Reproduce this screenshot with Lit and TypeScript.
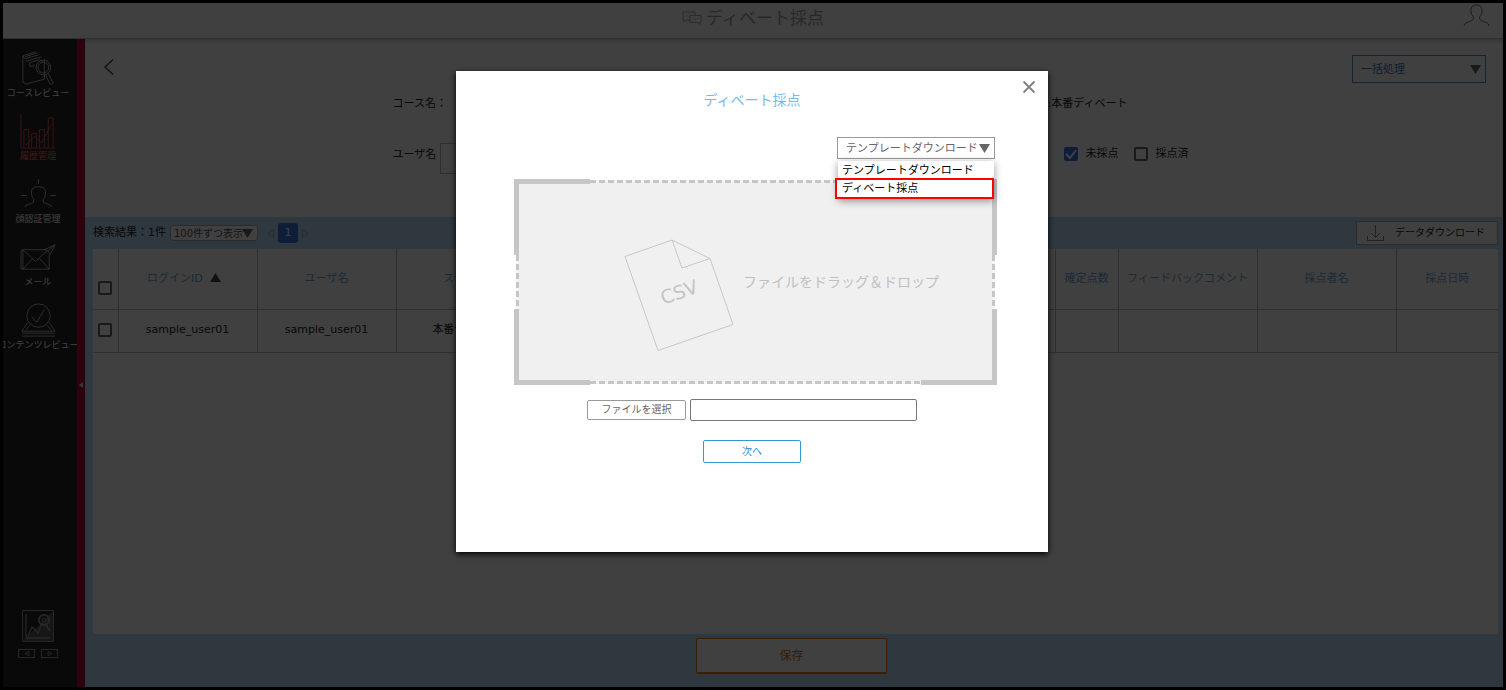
import { LitElement, html, svg, css } from "lit";
import { customElement, property, state } from "lit/decorators.js";
import { classMap } from "lit/directives/class-map.js";

const base = css`
  *,
  *::before {
    box-sizing: border-box;
  }
  button,
  input,
  select {
    font: inherit;
    color: inherit;
    margin: 0;
    padding: 0;
    border: 0;
    border-radius: 0;
    background: none;
  }
  svg {
    display: block;
    flex: none;
  }
`;

const menu = [
  {
    label: "コースレビュー",
    icon: svg`<path d="M3 6v27l3 2 19-5V9M3 6 16 2M3 6l2 3 14-4M5 7l13-4M8 11l14-4M6 10l2 2M10 17v-4l10-3 3 2M10 17l5-1M25 26v3"/><circle cx="24" cy="18" r="7.5"/><circle cx="24" cy="18" r="5.5"/><path d="m26 25 5 10q2 1 3-1l-5-10"/>`,
  },
  {
    label: "履歴管理",
    active: true,
    icon: svg`<path d="M1 1v35h35M4 36V17h5v19M12 36V21h5v15M20 36V17h5v19M29 36V5h5v31M6 33l9-9 7 7 10-19"/>`,
  },
  {
    label: "顔認証管理",
    icon: svg`<path d="M19 3v5M1 20h6M31 20h6M14 24q-2-2-2-5-2-8 7-8t7 8q0 3-2 5v3q1 1 5 2 4 1 4 3M14 24v3q-1 1-5 2-4 1-4 3"/>`,
  },
  {
    label: "メール",
    icon: svg`<path d="M3 11h24M3 11v20h27V16M3 31l10-11M30 31 20 20M3 11l13 12 12-11M3 12H1v19h2M36 6l-11 5 4 1 2 4 5-10-7 6"/>`,
  },
  {
    label: "コンテンツレビュー",
    icon: svg`<circle cx="19" cy="14" r="12"/><path d="m12 15 5 6 8-13M8 21 2 30h34l-6-9M10 24l-4 5M28 24l4 5M2 32h34M2 35h34"/>`,
  },
];

@customElement("side-menu")
class SideMenu extends LitElement {
  static styles = [
    base,
    css`
      :host {
        display: flex;
        background: #282424;
        color: #fff;
        font-size: 9px;
        line-height: 12px;
        overflow: hidden;
      }
      .column {
        width: 74px;
        padding: 11px 4px 29px 0;
        display: flex;
        flex-direction: column;
        justify-content: space-between;
        overflow: hidden;
      }
      nav {
        display: flex;
        flex-direction: column;
        gap: 14px;
      }
      .item {
        display: flex;
        flex-direction: column;
        align-items: center;
        color: inherit;
        text-decoration: none;
        white-space: nowrap;
      }
      .item svg {
        stroke: #b8b8b8;
      }
      .active {
        color: #ff686c;
      }
      .active svg {
        stroke: #d85054;
      }
      .foot {
        display: flex;
        flex-direction: column;
        align-items: center;
        gap: 7px;
      }
      .steps {
        display: flex;
        gap: 6px;
      }
      .steps button {
        width: 17px;
        height: 9px;
        border: 1px solid #989898;
        display: grid;
        place-items: center;
      }
      .toggle {
        width: 8px;
        background: #b00830;
        display: grid;
        place-items: center;
        padding-top: 44px;
      }
    `,
  ];

  render() {
    return html`
      <div class="column">
        <nav>
          ${menu.map(
            (m) => html`<a href="#" class=${classMap({ item: true, active: !!m.active })}>
              <svg width="37" height="37" viewBox="0 0 38 38" fill="none">${m.icon}</svg>
              <span>${m.label}</span>
            </a>`
          )}
        </nav>
        <div class="foot">
          <svg width="32" height="32" viewBox="0 0 32 32" fill="none" stroke="#989898">
            <path d="M31 1v30H1z" fill="#585858" stroke="none" />
            <path d="M.5.500h31v31H.5z" />
            <path d="M4 4v24h24M6 26l4-9 6 6 4-10" stroke-width="1.300" />
            <circle cx="22" cy="10" r="5" stroke-width="2" />
            <circle cx="22" cy="10" r="2" />
            <path d="m24 15 4 6" stroke-width="2" />
          </svg>
          <div class="steps">
            <button aria-label="前へ">
              <svg width="6" height="5" viewBox="0 0 6 5" fill="none" stroke="#989898"><path d="M5 .500v4L1 2.500z" /></svg>
            </button>
            <button aria-label="次へ">
              <svg width="6" height="5" viewBox="0 0 6 5" fill="none" stroke="#989898"><path d="M1 .500v4l4-2z" /></svg>
            </button>
          </div>
        </div>
      </div>
      <button class="toggle" aria-label="メニューを閉じる">
        <svg width="4" height="6" viewBox="0 0 4 6" fill="#ddd"><path d="M4 0v6L0 3z" /></svg>
      </button>
    `;
  }
}

@customElement("drop-select")
class DropSelect extends LitElement {
  @property() label = "";
  @property() text = "";

  static styles = [
    base,
    css`
      :host {
        display: grid;
        align-items: center;
      }
      select,
      svg {
        grid-area: 1 / 1;
      }
      select {
        width: 100%;
        height: 100%;
        appearance: none;
        padding: 1px 0 0 var(--inset, 8px);
      }
      svg {
        justify-self: end;
        margin-right: 4px;
        pointer-events: none;
      }
    `,
  ];

  render() {
    return html`
      <select aria-label=${this.label}><option>${this.text}</option></select>
      <svg width="11" height="9" viewBox="0 0 11 9" fill="#666"><path d="M0 0h11L5.500 9z" /></svg>
    `;
  }
}

@customElement("grading-page")
class GradingPage extends LitElement {
  static styles = [
    base,
    css`
      :host {
        display: flex;
        flex-direction: column;
        color: #222;
        background: #c0e0fc;
      }
      .filters {
        background: #fff;
        height: 178px;
        padding: 16px 17px 0 19px;
        box-shadow: inset 0 3px 3px #ddd;
      }
      .top {
        display: flex;
        justify-content: space-between;
        align-items: flex-start;
      }
      .back {
        display: block;
        padding-top: 4px;
      }
      .bulk {
        width: 134px;
        height: 28px;
        border: 1px solid #4090c8;
        color: #3080b8;
      }
      .form {
        width: 805px;
        padding-right: 8px;
        margin: 11px auto 0;
        display: grid;
        grid-template-columns: 655px auto;
        row-gap: 29px;
        line-height: 20px;
      }
      .field {
        display: flex;
        align-items: center;
        gap: 4px;
        height: 31px;
      }
      .line {
        height: 20px;
      }
      .field label {
        padding-bottom: 8px;
      }
      .field input {
        width: 240px;
        height: 31px;
        border: 1px solid #bbb;
      }
      .checks {
        display: flex;
        gap: 15px;
        padding-left: 16px;
        height: 22px;
      }
      .checks label {
        display: flex;
        align-items: center;
        gap: 8px;
      }
      .box {
        appearance: none;
        width: 14px;
        height: 14px;
        border: 2px solid #666;
        border-radius: 2px;
        display: block;
      }
      .box:checked {
        border: 0;
        background: #3a78e0
          url("data:image/svg+xml,%3Csvg xmlns='http://www.w3.org/2000/svg' viewBox='0 0 14 14' fill='none' stroke='white' stroke-width='2'%3E%3Cpath d='m2 7 4 4 6-8'/%3E%3C/svg%3E");
      }
      .results {
        flex: 1;
        display: flex;
        flex-direction: column;
        padding: 0 5px 0 8px;
      }
      .bar {
        height: 32px;
        display: flex;
        align-items: center;
        gap: 4px;
      }
      .count {
        --inset: 3px;
        width: 88px;
        height: 16px;
        border: 1px solid #aaa;
        border-radius: 3px;
        background: #fff;
        color: #555;
        font-size: 10px;
        line-height: 14px;
      }
      .pager {
        display: flex;
        align-items: center;
        gap: 4px;
        padding-left: 5px;
      }
      .page {
        width: 20px;
        height: 20px;
        border-radius: 3px;
        background: #3a78e0;
        color: #fff;
      }
      .download {
        margin-left: auto;
        width: 142px;
        height: 24px;
        background: #fff;
        border: 1px solid #aaa;
        font-size: 10px;
        display: flex;
        align-items: center;
        gap: 11px;
        padding-left: 10px;
      }
      .sheet {
        flex: 1;
        background: #fff;
      }
      table {
        width: 100%;
        border-collapse: collapse;
        table-layout: fixed;
        text-align: center;
      }
      th,
      td {
        padding: 0;
        border-bottom: 1px solid #bbb;
        border-left: 1px solid #bbb;
        white-space: nowrap;
        overflow: hidden;
      }
      th:first-child,
      td:first-child {
        border-left: 0;
      }
      th {
        height: 60px;
        font-weight: normal;
        color: #70a8d8;
      }
      td {
        height: 43px;
        padding-bottom: 2px;
      }
      .tick {
        width: 25px;
      }
      th.tick {
        padding-top: 18px;
      }
      .tick .box {
        margin-left: 5px;
      }
      .wide {
        width: 139px;
      }
      .status {
        width: 149px;
      }
      .score {
        width: 63px;
      }
      .last {
        width: 102px;
      }
      .sort {
        display: inline-block;
        margin: 0 7px 0 4px;
        fill: #444;
      }
      footer {
        display: flex;
        justify-content: center;
        padding: 4px 5px 13px 0;
      }
      .save {
        width: 191px;
        height: 36px;
        background: #fff;
        border: 1px solid #e88000;
        border-bottom-width: 2px;
        border-radius: 2px;
        color: #d87000;
        font-size: 12px;
      }
    `,
  ];

  render() {
    return html`
      <section class="filters">
        <div class="top">
          <button class="back" aria-label="戻る">
            <svg width="10" height="16" viewBox="0 0 10 16" fill="none" stroke="#444" stroke-width="1.300"><path d="M9 .500 1 8l8 7.500" /></svg>
          </button>
          <drop-select class="bulk" label="一括処理" text="一括処理"></drop-select>
        </div>
        <div class="form">
          <div class="line">コース名：</div>
          <div class="line">:本番ディベート</div>
          <div class="field"><label for="user">ユーザ名</label><input id="user" type="text" /></div>
          <div class="checks">
            <label><input class="box" type="checkbox" checked />未採点</label>
            <label><input class="box" type="checkbox" />採点済</label>
          </div>
        </div>
      </section>
      <section class="results">
        <div class="bar">
          <span>検索結果：1件</span>
          <drop-select class="count" label="表示件数" text="100件ずつ表示"></drop-select>
          <div class="pager">
            <svg width="7" height="9" viewBox="0 0 7 9" fill="none" stroke="#98b0c4"><path d="M6.500.500v8l-6-4z" /></svg>
            <button class="page">1</button>
            <svg width="7" height="9" viewBox="0 0 7 9" fill="none" stroke="#98b0c4"><path d="M.5.500v8l6-4z" /></svg>
          </div>
          <button class="download">
            <svg width="17" height="16" viewBox="0 0 17 16" fill="none" stroke="#888"><path d="M8.500 0v12M4 8l4.500 4.500L13 8M.5 11v4.500h16V11" /></svg>
            データダウンロード
          </button>
        </div>
        <div class="sheet">
          <table>
            <thead>
              <tr>
                <th class="tick"><input class="box" type="checkbox" aria-label="すべて選択" /></th>
                <th class="wide">
                  ログインID
                  <svg class="sort" width="11" height="9" viewBox="0 0 11 9"><path d="M5.500 0 11 9H0z" /></svg>
                </th>
                <th class="wide">ユーザ名</th>
                <th class="status">ステータス</th>
                <th></th>
                <th class="score">確定点数</th>
                <th class="wide">フィードバックコメント</th>
                <th class="wide">採点者名</th>
                <th class="last">採点日時</th>
              </tr>
            </thead>
            <tbody>
              <tr>
                <td class="tick"><input class="box" type="checkbox" aria-label="sample_user01を選択" /></td>
                <td>sample_user01</td>
                <td>sample_user01</td>
                <td>本番ディベート</td>
                <td></td>
                <td></td>
                <td></td>
                <td></td>
                <td></td>
              </tr>
            </tbody>
          </table>
        </div>
      </section>
      <footer><button class="save">保存</button></footer>
    `;
  }
}

@customElement("upload-dialog")
class UploadDialog extends LitElement {
  @state() private options = ["テンプレートダウンロード", "ディベート採点"];

  static styles = [
    base,
    css`
      :host {
        display: block;
        width: 592px;
        min-height: 481px;
        padding: 8px 51px 0 58px;
        background: #fff;
        color: #666;
        box-shadow: 0 2px 6px #000;
      }
      .head {
        display: grid;
        grid-template-columns: 1fr;
        height: 31px;
        margin-right: -40px;
      }
      .head > * {
        grid-area: 1 / 1;
      }
      .close {
        z-index: 1;
        justify-self: end;
        align-self: start;
        padding: 1px;
      }
      h2 {
        margin: 0 47px 0 0;
        align-self: end;
        font-size: 14px;
        line-height: 20px;
        font-weight: normal;
        text-align: center;
        color: #78b8ec;
      }
      .kind {
        position: relative;
        width: 158px;
        margin: 27px 2px 20px auto;
      }
      .pick {
        height: 22px;
        border: 1px solid #999;
      }
      .list {
        position: absolute;
        top: 24px;
        left: 1px;
        width: 156px;
        background: #fff;
        color: #000;
        box-shadow: 0 2px 8px rgba(0, 0, 0, 0.4);
      }
      .option {
        padding-left: 4px;
        height: 17px;
        line-height: 20px;
      }
      .marked {
        height: 21px;
        margin-left: -3px;
        padding-left: 5px;
        border: 2px solid #f00;
        line-height: 18px;
        background: #fff;
      }
      .drop {
        --c: linear-gradient(#c6c6c6, #c6c6c6);
        --h: repeating-linear-gradient(90deg, #c6c6c6 0 6px, #f4f4f4 6px 9px);
        --v: repeating-linear-gradient(#c6c6c6 0 6px, #f4f4f4 6px 9px);
        height: 206px;
        display: flex;
        align-items: center;
        gap: 9px;
        padding-left: 110px;
        color: #c0c0c0;
        font-size: 14px;
        background:
          var(--c) 0 0 / 76px 5px,
          var(--c) 0 0 / 5px 76px,
          var(--c) 100% 0 / 76px 5px,
          var(--c) 100% 0 / 5px 76px,
          var(--c) 0 100% / 76px 5px,
          var(--c) 0 100% / 5px 76px,
          var(--c) 100% 100% / 76px 5px,
          var(--c) 100% 100% / 5px 76px,
          var(--h) 4px 1px / calc(100% - 8px) 3px,
          var(--h) 4px calc(100% - 1px) / calc(100% - 8px) 3px,
          var(--v) 2px 4px / 3px calc(100% - 8px),
          var(--v) calc(100% - 2px) 4px / 3px calc(100% - 8px),
          linear-gradient(#f0f0f0, #f0f0f0) 50% 50% / calc(100% - 8px) calc(100% - 8px);
        background-repeat: no-repeat;
      }
      .doc {
        margin-top: 26px;
      }
      .file {
        display: flex;
        align-items: center;
        justify-content: center;
        gap: 4px;
        margin: 14px 7px 19px 0;
        font-size: 10px;
      }
      .choose {
        width: 99px;
        height: 20px;
        border: 1px solid #999;
        border-radius: 2px;
      }
      .path {
        width: 227px;
        height: 22px;
        border: 1px solid #777;
        border-radius: 2px;
        padding: 0 4px;
      }
      .next {
        display: block;
        width: 98px;
        height: 23px;
        margin: 0 auto;
        border: 1px solid #3498d4;
        border-radius: 2px;
        color: #2890d0;
        font-size: 10px;
      }
      .action {
        padding-right: 7px;
      }
    `,
  ];

  render() {
    return html`
      <div class="head">
        <h2>ディベート採点</h2>
        <button class="close" aria-label="閉じる">
          <svg width="14" height="14" viewBox="0 0 14 14" stroke="#808080" stroke-width="1.800"><path d="m1.500 1.500 11 11m0-11-11 11" /></svg>
        </button>
      </div>
      <div class="kind">
        <drop-select class="pick" label="種別" text=${this.options[0]}></drop-select>
        <div class="list" role="listbox" aria-label="種別">
          ${this.options.map(
            (o, i) => html`<div role="option" class=${classMap({ option: true, marked: i === 1 })}>${o}</div>`
          )}
        </div>
      </div>
      <div class="drop">
        <svg class="doc" width="110" height="113" viewBox="0 0 110 113" fill="none" stroke="#c8c8c8">
          <path d="M1 17.500 48 1l38 18.500 23 66L34 111.500zM48 1l10 28 28-9.500" />
          <text x="55" y="60" transform="rotate(-19 55 53)" text-anchor="middle" font-family="DejaVu Sans, sans-serif" font-size="19" fill="#c4c4c4" stroke="none">CSV</text>
        </svg>
        <span>ファイルをドラッグ＆ドロップ</span>
      </div>
      <div class="file">
        <button class="choose">ファイルを選択</button>
        <input class="path" type="text" aria-label="ファイル名" />
      </div>
      <div class="action"><button class="next">次へ</button></div>
    `;
  }
}

@customElement("app-root")
class AppRoot extends LitElement {
  static styles = [
    base,
    css`
      :host {
        box-sizing: border-box;
        position: relative;
        display: flex;
        flex-direction: column;
        min-height: 100vh;
        border: 3px solid #000;
        background: #fff;
        font-family: "DejaVu Sans", "Noto Sans CJK JP", sans-serif;
        font-size: 11px;
        line-height: 16px;
        color: #222;
      }
      header {
        height: 36px;
        display: grid;
        grid-template-columns: 1fr auto 1fr;
        align-items: start;
        border-bottom: 1px solid #bbb;
      }
      h1 {
        grid-column: 2;
        margin: 0;
        display: flex;
        align-items: center;
        gap: 4px;
        font-size: 17px;
        line-height: 30px;
        font-weight: normal;
        color: #a0a0a0;
      }
      .user {
        justify-self: end;
        padding: 1px 13px 0 0;
      }
      .body {
        flex: 1;
        display: flex;
      }
      grading-page {
        flex: 1;
        min-width: 0;
      }
      .overlay {
        position: absolute;
        inset: 0;
        background: rgba(0, 0, 0, 0.75);
        display: flex;
        justify-content: center;
        align-items: flex-start;
        padding: 68px 2px 0 0;
      }
    `,
  ];

  render() {
    return html`
      <header>
        <h1>
          <svg width="20" height="14" viewBox="0 0 20 14" fill="none" stroke="#aaa">
            <path d="M8 9H4l-2 2V9H1V1h12v3M8 4.500h11v7h-1v2l-2-2H8zM3.500 5h1m1 0h1m1 0h1M11 8h1m1 0h1m1 0h1" />
          </svg>
          ディベート採点
        </h1>
        <button class="user" aria-label="ユーザー">
          <svg width="27" height="23" viewBox="0 0 27 23" fill="none" stroke="#777">
            <path d="M1 22q0-3 4-4 6-1 5.500-5Q8 11 8 8q-1-7 5.500-7T19 8q0 3-2.500 5-.5 4 5.500 5 4 1 4 4" />
          </svg>
        </button>
      </header>
      <div class="body">
        <side-menu></side-menu>
        <grading-page></grading-page>
      </div>
      <div class="overlay">
        <upload-dialog role="dialog" aria-label="ディベート採点"></upload-dialog>
      </div>
    `;
  }
}
